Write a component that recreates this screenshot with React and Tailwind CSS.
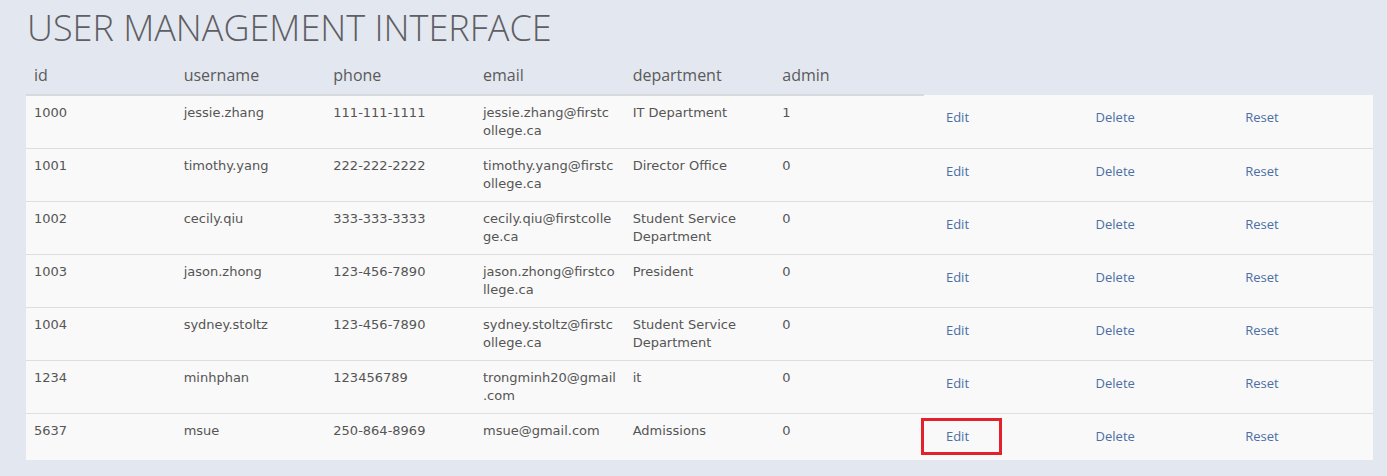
import React from "react";

const rows = [
  { id: "1000", user: "jessie.zhang", phone: "111-111-1111", email: ["jessie.zhang@firstc", "ollege.ca"], dept: ["IT Department"], admin: "1" },
  { id: "1001", user: "timothy.yang", phone: "222-222-2222", email: ["timothy.yang@firstc", "ollege.ca"], dept: ["Director Office"], admin: "0" },
  { id: "1002", user: "cecily.qiu", phone: "333-333-3333", email: ["cecily.qiu@firstcolle", "ge.ca"], dept: ["Student Service", "Department"], admin: "0" },
  { id: "1003", user: "jason.zhong", phone: "123-456-7890", email: ["jason.zhong@firstco", "llege.ca"], dept: ["President"], admin: "0" },
  { id: "1004", user: "sydney.stoltz", phone: "123-456-7890", email: ["sydney.stoltz@firstc", "ollege.ca"], dept: ["Student Service", "Department"], admin: "0" },
  { id: "1234", user: "minhphan", phone: "123456789", email: ["trongminh20@gmail", ".com"], dept: ["it"], admin: "0" },
  { id: "5637", user: "msue", phone: "250-864-8969", email: ["msue@gmail.com"], dept: ["Admissions"], admin: "0", highlight: true },
];

const dataFont = { fontFamily: '"DejaVu Sans", Verdana, sans-serif' };

function Lines({ lines }) {
  return lines.map((l, i) => (
    <span key={i} className="block whitespace-nowrap">{l}</span>
  ));
}

function ActionCell({ label, boxed }) {
  return (
    <td className="align-top pt-[4px] pb-[5px] px-0">
      <a
        href="#"
        className={`ml-[-3px] flex h-[37px] w-[81px] items-center text-[13px] text-[#4b6ea4] ${boxed ? "border-[3px] border-[#e3202b] pl-[22px]" : "pl-[25px]"}`}
        style={{ fontFamily: '"Open Sans", sans-serif' }}
      >
        {label}
      </a>
    </td>
  );
}

export default function App() {
  const headers = ["id", "username", "phone", "email", "department", "admin"];
  return (
    <div className="min-h-[476px] w-full bg-[#e3e7f0] px-[26px] pt-[6px]" style={{ fontFamily: '"Open Sans", sans-serif' }}>
      <h1 className="text-[36px] font-light leading-[44px] text-[#5e5e63] ml-px">USER MANAGEMENT INTERFACE</h1>
      <table className="w-[1347px] table-fixed border-collapse mt-[9px]">
        <colgroup>
          {Array.from({ length: 9 }).map((_, i) => (
            <col key={i} className="w-[149.67px]" />
          ))}
        </colgroup>
        <thead>
          <tr>
            {headers.map((h) => (
              <th key={h} className="border-b-2 border-[#d6d9de] px-2 pt-[5px] pb-[8px] text-left text-[16px] font-normal leading-[22px] text-[#5a5a5a]">
                {h}
              </th>
            ))}
            <th></th>
            <th></th>
            <th></th>
          </tr>
        </thead>
        <tbody>
          {rows.map((r, idx) => (
            <tr key={r.id} className={`bg-[#f9f9f9] ${idx > 0 ? "border-t border-[#dedede]" : ""}`}>
              {[r.id, r.user, r.phone].map((v, i) => (
                <td key={i} className="align-top px-2 py-2 text-[13px] leading-[18px] text-[#555]" style={dataFont}>
                  {v}
                </td>
              ))}
              <td className="align-top px-2 py-2 text-[13px] leading-[18px] text-[#555]" style={dataFont}>
                <Lines lines={r.email} />
              </td>
              <td className="align-top px-2 py-2 text-[13px] leading-[18px] text-[#555]" style={dataFont}>
                <Lines lines={r.dept} />
              </td>
              <td className="align-top px-2 py-2 text-[13px] leading-[18px] text-[#555]" style={dataFont}>
                {r.admin}
              </td>
              <ActionCell label="Edit" boxed={r.highlight} />
              <ActionCell label="Delete" />
              <ActionCell label="Reset" />
            </tr>
          ))}
        </tbody>
      </table>
    </div>
  );
}
